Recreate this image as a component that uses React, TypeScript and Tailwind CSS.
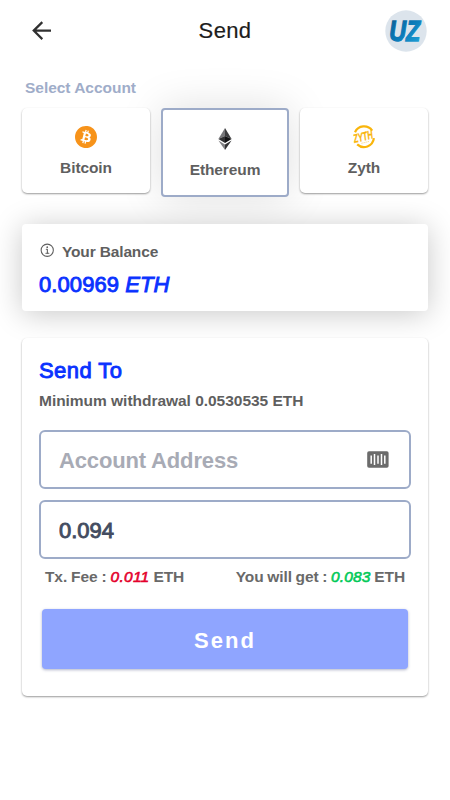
import clsx from "clsx";
import type { ReactNode } from "react";
import { SiBitcoin } from "react-icons/si";
import { IoInformationCircleOutline } from "react-icons/io5";

function BackIcon() {
  return (
    <svg width="20" height="20" viewBox="0 0 20 20" fill="none" stroke="#303030" strokeWidth="2.2">
      <path d="M19 9.6H2M10.3 1.1L1.7 9.6l8.6 8.5" />
    </svg>
  );
}

function Avatar() {
  return (
    <svg width="42" height="42" viewBox="0 0 42 42" className="overflow-visible">
      <defs>
        <linearGradient id="uz" x1="0" y1="0" x2="1" y2="1">
          <stop offset="0" stopColor="#0a5c92" />
          <stop offset="0.5" stopColor="#0b7ab8" />
          <stop offset="1" stopColor="#23a8dd" />
        </linearGradient>
      </defs>
      <circle cx="21" cy="21" r="20.7" fill="#dce4ec" />
      <text
        x="4.2"
        y="31"
        fontFamily="Liberation Sans, sans-serif"
        fontSize="29"
        fontWeight="700"
        fontStyle="italic"
        textLength="31"
        lengthAdjust="spacingAndGlyphs"
        fill="url(#uz)"
        stroke="url(#uz)"
        strokeWidth="1.3"
      >
        UZ
      </text>
      <path d="M16 32.5L27 18" stroke="#dce4ec" strokeWidth="1" />
    </svg>
  );
}

function EthereumIcon() {
  return (
    <svg width="14" height="22" viewBox="0 0 14 22">
      <path d="M7 0L0.4 11 7 8z" fill="#77777a" />
      <path d="M7 0l6.6 11L7 8z" fill="#3d3d3f" />
      <path d="M0.4 11L7 8v6.9z" fill="#303032" />
      <path d="M13.6 11L7 8v6.9z" fill="#111113" />
      <path d="M0.4 12.6L7 16.5V22z" fill="#828285" />
      <path d="M13.6 12.6L7 16.5V22z" fill="#343436" />
    </svg>
  );
}

function ZythIcon() {
  return (
    <svg width="22" height="22" viewBox="0 0 22 22" className="overflow-visible">
      <g fill="none" stroke="#f9b50b" strokeWidth="2.2">
        <path d="M2 6.2A10 10 0 0 1 19.2 4.6" />
        <path d="M20.9 12.2A10 10 0 0 1 4.2 18.4" />
      </g>
      <text
        x="1.6"
        y="17"
        fontFamily="Liberation Sans, sans-serif"
        fontSize="12"
        fontWeight="700"
        fontStyle="italic"
        fill="#f9b50b"
        stroke="#f9b50b"
        strokeWidth="0.3"
        textLength="19.5"
        lengthAdjust="spacingAndGlyphs"
        transform="rotate(-14 1.6 17)"
      >
        ZYTH
      </text>
      <path d="M8.5 17.3l8-2" stroke="#f9b50b" strokeWidth="1" strokeDasharray="1.2 0.9" opacity="0.5" />
    </svg>
  );
}

function BarcodeIcon() {
  return (
    <svg width="22" height="17" viewBox="0 0 22 17">
      <rect x="0.2" y="0.2" width="21.4" height="16.6" rx="1.8" fill="#6b6b6b" />
      <g stroke="#fff" strokeWidth="1.5">
        <path d="M4.2 4.4v8.4M7.5 3v11M11 4.4v8.4M14.5 3v11M17.8 4.4v8.4" />
      </g>
    </svg>
  );
}

interface AccountCardProps {
  name: string;
  icon: ReactNode;
  active?: boolean;
}

function AccountCard({ name, icon, active }: AccountCardProps) {
  return (
    <button
      className={clsx(
        "relative flex w-32 flex-col items-center bg-white text-[15.5px] leading-5 font-bold tracking-[-0.1px] text-[#5f5f5f]",
        active
          ? "z-10 h-[89px] rounded border-2 border-[#9dabc8] pt-[18px] shadow-[0_0_44px_rgba(0,0,0,0.13)]"
          : "z-20 h-[85px] rounded-[5px] pt-[18px] shadow-[0_1px_2px_rgba(0,0,0,0.4)]"
      )}
    >
      <span className="flex h-[22px] items-center">{icon}</span>
      <span className="mt-[10px]">{name}</span>
    </button>
  );
}

export default function App() {
  return (
    <main className="h-[800px] w-[450px] overflow-hidden bg-white font-['Liberation_Sans',Arial,sans-serif]">
      {/* Header */}
      <header className="flex h-[61px] items-center justify-between pr-[23px] pl-8">
        <BackIcon />
        <h1 className="ml-[13px] text-[22px] tracking-[0.35px] text-[#1c1c1c] [-webkit-text-stroke:0.2px]">Send</h1>
        <Avatar />
      </header>

      <div className="px-[22px]">
        {/* Accounts */}
        <h2 className="mt-[17px] ml-[3px] text-[15.5px] leading-5 font-bold tracking-[-0.03px] text-[#9fadc9]">
          Select Account
        </h2>
        <div className="mt-[10px] flex h-[89px] items-start justify-between">
          <AccountCard name="Bitcoin" icon={<SiBitcoin size={22} color="#f7931a" />} />
          <AccountCard name="Ethereum" icon={<EthereumIcon />} active />
          <AccountCard name="Zyth" icon={<ZythIcon />} />
        </div>

        {/* Balance */}
        <section className="relative z-20 mt-[27px] h-[87px] rounded bg-white pt-[18px] pl-[17px] shadow-[0_3px_30px_rgba(0,0,0,0.22)]">
          <div className="flex h-5 items-center text-[15.5px] font-bold text-[#5f5f5f]">
            <IoInformationCircleOutline size={17} className="-mt-[3px] mr-[6px]" />
            <span className="tracking-[-0.15px]">Your Balance</span>
          </div>
          <p className="mt-[9px] text-[22px] leading-7 tracking-[0.08px] text-[#0a32ff] [-webkit-text-stroke:0.9px]">
            0.00969 <em>ETH</em>
          </p>
        </section>

        {/* Send form */}
        <section className="relative z-30 mt-[27px] h-[358px] rounded-[5px] bg-white px-[17px] pt-[19px] shadow-[0_1px_2px_rgba(0,0,0,0.4)]">
          <h2 className="text-[22px] leading-7 tracking-[0.45px] text-[#0a32ff] [-webkit-text-stroke:0.9px]">Send To</h2>
          <p className="mt-[6px] text-[15.5px] leading-5 font-bold tracking-[-0.03px] text-[#5f5f5f]">
            Minimum withdrawal 0.0530535 ETH
          </p>

          <div className="mt-[19px] flex h-[59px] items-center rounded-md border-2 border-[#9dabc8] pr-5 pl-[18px]">
            <input
              className="min-w-0 flex-1 pt-[2px] text-[22px] font-bold tracking-[-0.15px] outline-none placeholder:text-[#a8abb5] placeholder:opacity-100"
              placeholder="Account Address"
            />
            <BarcodeIcon />
          </div>
          <div className="mt-[11px] flex h-[59px] items-center rounded-md border-2 border-[#9dabc8] pl-[18px]">
            <input
              className="w-full pt-[2px] text-[22px] text-[#434c60] outline-none [-webkit-text-stroke:0.9px]"
              defaultValue="0.094"
            />
          </div>

          <div className="mt-2 flex justify-between pr-[6px] pl-[6px] text-[15.5px] leading-5 font-bold tracking-[-0.1px] text-[#696969]">
            <p className="[word-spacing:-0.2px]">
              Tx. Fee : <em className="font-normal tracking-[0.25px] text-[#e4002b] [-webkit-text-stroke:0.6px]">0.011</em> ETH
            </p>
            <p className="[word-spacing:-0.5px]">
              You will get : <em className="font-normal tracking-[0.15px] text-[#00c957] [-webkit-text-stroke:0.6px]">0.083</em> ETH
            </p>
          </div>

          <button className="mx-[3px] mt-[22px] block h-[60px] w-[366px] rounded bg-[#8fa5ff] pt-[2px] text-[22px] font-bold tracking-[2px] text-white shadow-[0_1px_3px_rgba(60,70,120,0.4)]">
            Send
          </button>
        </section>
      </div>
    </main>
  );
}
